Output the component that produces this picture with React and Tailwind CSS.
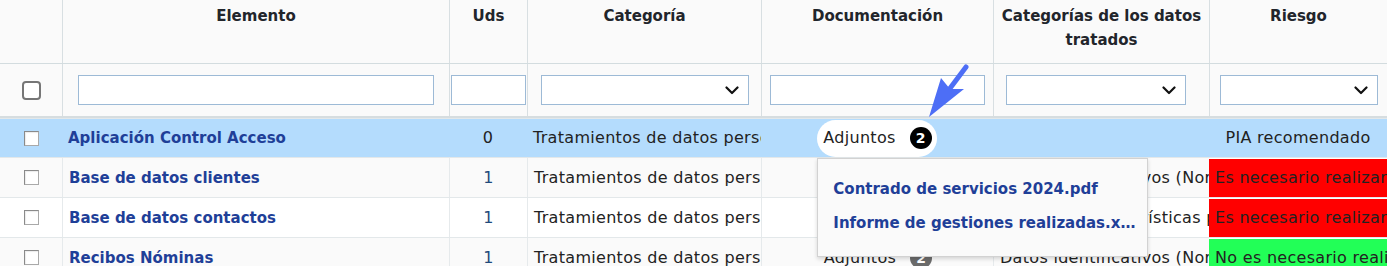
import React from "react";

const FONT = { fontFamily: '"DejaVu Sans", "Liberation Sans", sans-serif' };
const COLS = "grid grid-cols-[62px_387px_78px_234px_232px_216px_178px] w-[1387px]";

function Chevron() {
  return (
    <svg width="14" height="9" viewBox="0 0 14 9" className="shrink-0">
      <path d="M1.5 1.5 L7 7 L12.5 1.5" fill="none" stroke="#111" strokeWidth="2.2" strokeLinecap="round" strokeLinejoin="round" />
    </svg>
  );
}

function Select({ w }) {
  return (
    <div className={`${w} h-[30px] bg-white border border-[#9dbad6] flex items-center justify-end pr-[9px]`}>
      <Chevron />
    </div>
  );
}

function Input({ w }) {
  return <div className={`${w} h-[30px] bg-white border border-[#9dbad6]`} />;
}

function Box() {
  return (
    <div className="w-[15px] h-[15px] bg-white border border-[#a9a9a9] border-t-[#8a8a8a] border-l-[#8a8a8a] shadow-[inset_1px_1px_1px_rgba(0,0,0,0.08)]" />
  );
}

const rows = [
  { name: "Aplicación Control Acceso", uds: "0", cat: "Tratamientos de datos personales", datos: "", risk: "PIA recomendado", riskBg: "", active: true },
  { name: "Base de datos clientes", uds: "1", cat: "Tratamientos de datos personales", datos: "Datos identificativos (Normales)", risk: "Es necesario realizar PIA", riskBg: "bg-[#ff0000]" },
  { name: "Base de datos contactos", uds: "1", cat: "Tratamientos de datos personales", datos: "Datos de características personales", risk: "Es necesario realizar PIA", riskBg: "bg-[#ff0000]" },
  { name: "Recibos Nóminas", uds: "1", cat: "Tratamientos de datos personales", datos: "Datos identificativos (Normales)", risk: "No es necesario realizar PIA", riskBg: "bg-[#22ff57]" },
];

export default function App() {
  return (
    <div className="relative w-[1396px] h-[266px] overflow-hidden bg-white text-[#222]" style={FONT}>
      {/* header */}
      <div className={`${COLS} bg-[#fafafa] border-b border-[#d3dcdf] h-[64px] text-[15px] font-bold text-[#22252b] leading-6`}>
        <div />
        <div className="border-l border-[#d8dfe2] text-center pt-[4px]">Elemento</div>
        <div className="border-l border-[#d8dfe2] text-center pt-[4px]">Uds</div>
        <div className="border-l border-[#d8dfe2] text-center pt-[4px]">Categoría</div>
        <div className="border-l border-[#d8dfe2] text-center pt-[4px]">Documentación</div>
        <div className="border-l border-[#d8dfe2] text-center pt-[4px] px-[4px]">Categorías de los datos tratados</div>
        <div className="border-l border-[#d8dfe2] text-center pt-[4px]">Riesgo</div>
      </div>
      {/* filters */}
      <div className={`${COLS} bg-[#fafafa] border-b-2 border-[#d6dde0] h-[54px]`}>
        <div className="flex items-center justify-center">
          <div className="w-[19px] h-[19px] rounded-[4px] border-2 border-[#767676] bg-white" />
        </div>
        <div className="border-l border-[#d8dfe2] flex items-center justify-center"><Input w="w-[356px]" /></div>
        <div className="border-l border-[#d8dfe2] flex items-center justify-center"><Input w="w-[75px]" /></div>
        <div className="border-l border-[#d8dfe2] flex items-center justify-center"><Select w="w-[208px]" /></div>
        <div className="border-l border-[#d8dfe2] flex items-center justify-center"><Input w="w-[215px]" /></div>
        <div className="border-l border-[#d8dfe2] flex items-center justify-start pl-[12px]"><Select w="w-[180px]" /></div>
        <div className="border-l border-[#d8dfe2] flex items-center justify-center"><Select w="w-[158px]" /></div>
      </div>
      {/* rows */}
      {rows.map((r, i) => (
        <div
          key={i}
          className={`${COLS} ${i === 0 ? "h-[39px]" : "h-[40px]"} border-t border-[#e3e8ea] text-[16px] tracking-[0.3px] leading-6 ${r.active ? "bg-[#b4dcfd]" : i % 2 === 1 ? "bg-[#fafafa]" : "bg-white"}`}
        >
          <div className="flex items-center justify-center"><Box /></div>
          <div className={`flex items-center pl-[6px] font-bold text-[15px] tracking-normal text-[#1f3f98] ${r.active ? "" : "border-l border-[#e6eaec]"}`}>{r.name}</div>
          <div className={`flex items-center justify-center ${r.active ? "text-[#222]" : "text-[#1f4a7c] border-l border-[#e6eaec]"}`}>{r.uds}</div>
          <div className={`flex items-center pl-[6px] overflow-hidden whitespace-nowrap ${r.active ? "" : "border-l border-[#e6eaec]"}`}>{r.cat}</div>
          <div className={`relative flex items-center justify-center ${r.active ? "" : "border-l border-[#e6eaec]"}`}>
            <div className={`relative h-[37px] rounded-full pl-[6px] pr-[5px] flex items-center gap-[14px] ${r.active ? "bg-white z-20" : ""}`}>
              <span>Adjuntos</span>
              <span className={`w-[22px] h-[22px] rounded-full flex items-center justify-center text-white text-[14px] font-bold tracking-normal ${r.active ? "bg-black" : "bg-[#6b6b6b]"}`}>2</span>
              {r.active && (
                <div className="absolute left-0 top-[38px] w-[331px] h-[99px] bg-[#fafafa] border border-[#d2d2d2] shadow-[0_2px_4px_rgba(0,0,0,0.15)] flex flex-col pt-[18px] gap-[10px] pl-[15px] pr-[8px] font-bold text-[15px] tracking-normal text-[#1f3f98] whitespace-nowrap overflow-hidden">
                  <span>Contrado de servicios 2024.pdf</span>
                  <span>Informe de gestiones realizadas.x…</span>
                </div>
              )}
            </div>
          </div>
          <div className={`flex items-center pl-[6px] overflow-hidden whitespace-nowrap ${r.active ? "" : "border-l border-[#e6eaec]"}`}>{r.datos}</div>
          <div className={`flex items-center overflow-hidden whitespace-nowrap ${r.riskBg} ${r.active ? "justify-center" : "pl-[6px] border-t border-white"}`}>{r.risk}</div>
        </div>
      ))}
      {/* arrow annotation */}
      <svg className="absolute left-[920px] top-[60px] z-30" width="56" height="62" viewBox="0 0 56 62">
        <line x1="46" y1="7" x2="28" y2="31" stroke="#4d6ef6" strokeWidth="5" strokeLinecap="round" />
        <polygon points="9,57 21,18 30,29 44,29" fill="#4d6ef6" />
      </svg>
    </div>
  );
}
